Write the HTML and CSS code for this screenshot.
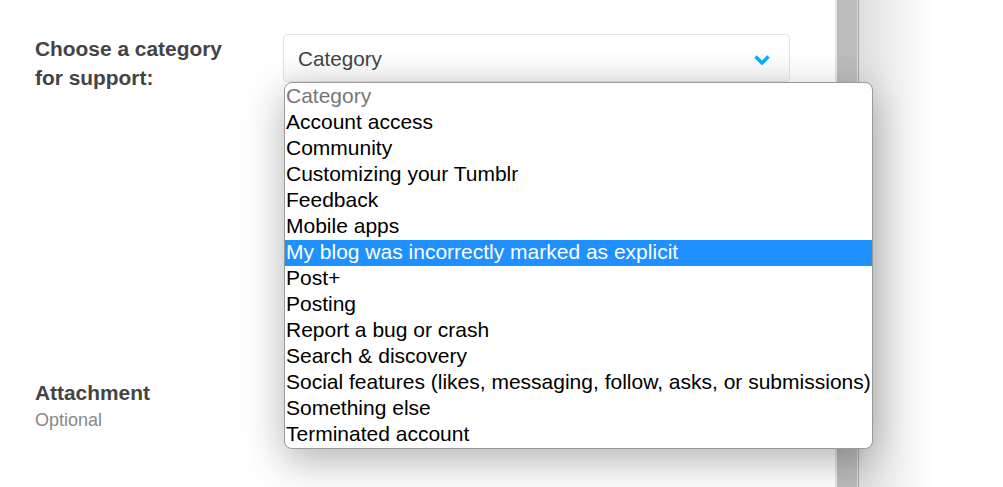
FILE: index.html
```html
<!DOCTYPE html>
<html>
<head>
<meta charset="utf-8">
<link rel="stylesheet" href="styles.css">
</head>
<body>
<div class="page">
  <main class="form">
    <div class="row row-category">
      <div class="label">Choose a category<br>for support:</div>
      <div class="field">
        <div class="select">
          <span class="select-text">Category</span>
          <svg class="chevron" width="18" height="11" viewBox="0 0 18 11"><path d="M2.5 2.5 L9 9 L15.5 2.5" fill="none" stroke="#00b2ff" stroke-width="3.4"/></svg>
        </div>
        <ul class="dropdown">
          <li class="placeholder">Category</li>
          <li>Account access</li>
          <li>Community</li>
          <li>Customizing your Tumblr</li>
          <li>Feedback</li>
          <li>Mobile apps</li>
          <li class="active">My blog was incorrectly marked as explicit</li>
          <li>Post+</li>
          <li>Posting</li>
          <li>Report a bug or crash</li>
          <li>Search &amp; discovery</li>
          <li>Social features (likes, messaging, follow, asks, or submissions)</li>
          <li>Something else</li>
          <li>Terminated account</li>
        </ul>
      </div>
    </div>
    <div class="row row-attach">
      <div class="label">Attachment<span class="sub">Optional</span></div>
    </div>
  </main>
  <div class="scrollbar"></div>
  <div class="side"></div>
</div>
</body>
</html>
```
FILE: styles.css
```css
html, body {
  margin: 0;
  padding: 0;
  height: 100%;
  overflow: hidden;
  background: #fff;
  font-family: "Liberation Sans", Arial, sans-serif;
}
.page {
  display: flex;
  height: 487px;
}
.form {
  width: 835px;
  flex: none;
  background: #fff;
  padding-top: 34px;
  box-sizing: border-box;
}
.row {
  display: grid;
  grid-template-columns: 248px 507px;
  padding-left: 35px;
}
.label {
  font-size: 20.9px;
  font-weight: bold;
  color: #444;
  line-height: 29px;
}
.label .sub {
  display: block;
  font-size: 18px;
  font-weight: normal;
  color: #888;
  line-height: 26px;
}
.row-attach {
  margin-top: 286px;
}
.field {
  position: relative;
}
.select {
  height: 48px;
  border: 1px solid #e3e3e3;
  border-radius: 4px;
  background: linear-gradient(#fff 40%, #f6f6f6);
  display: flex;
  align-items: center;
  justify-content: space-between;
  padding: 0 18px 0 14px;
  box-sizing: border-box;
}
.select-text {
  font-size: 20.7px;
  color: #444;
  margin-top: 2px;
}
.chevron {
  margin-top: 2px;
}
.dropdown {
  position: absolute;
  left: 1px;
  top: 48px;
  width: 589px;
  margin: 0;
  padding: 0;
  list-style: none;
  background: #fff;
  border: 1px solid #9a9a9a;
  border-radius: 8px;
  box-shadow: 0 12px 40px rgba(0,0,0,0.3);
  box-sizing: border-box;
  z-index: 5;
  overflow: hidden;
}
.dropdown li {
  font-size: 21px;
  line-height: 23px;
  height: 26px;
  padding: 0 0 3px 1px;
  box-sizing: border-box;
  color: #000;
  white-space: nowrap;
}
.dropdown li:first-child {
  margin-top: 1px;
}
.dropdown li.placeholder {
  color: #777;
}
.dropdown li.active {
  background: #1e90ff;
  color: #fff;
}
.scrollbar {
  width: 24px;
  flex: none;
  background: linear-gradient(to right, #e6e6e6 0 2px, #bcbcbc 2px 22px, #dcdcdc 22px 23px, #a8a8a8 23px 24px);
}
.side {
  flex: 1;
  background: linear-gradient(to right, #dedede, #f2f2f2 40px, #fff 75px);
}
```
